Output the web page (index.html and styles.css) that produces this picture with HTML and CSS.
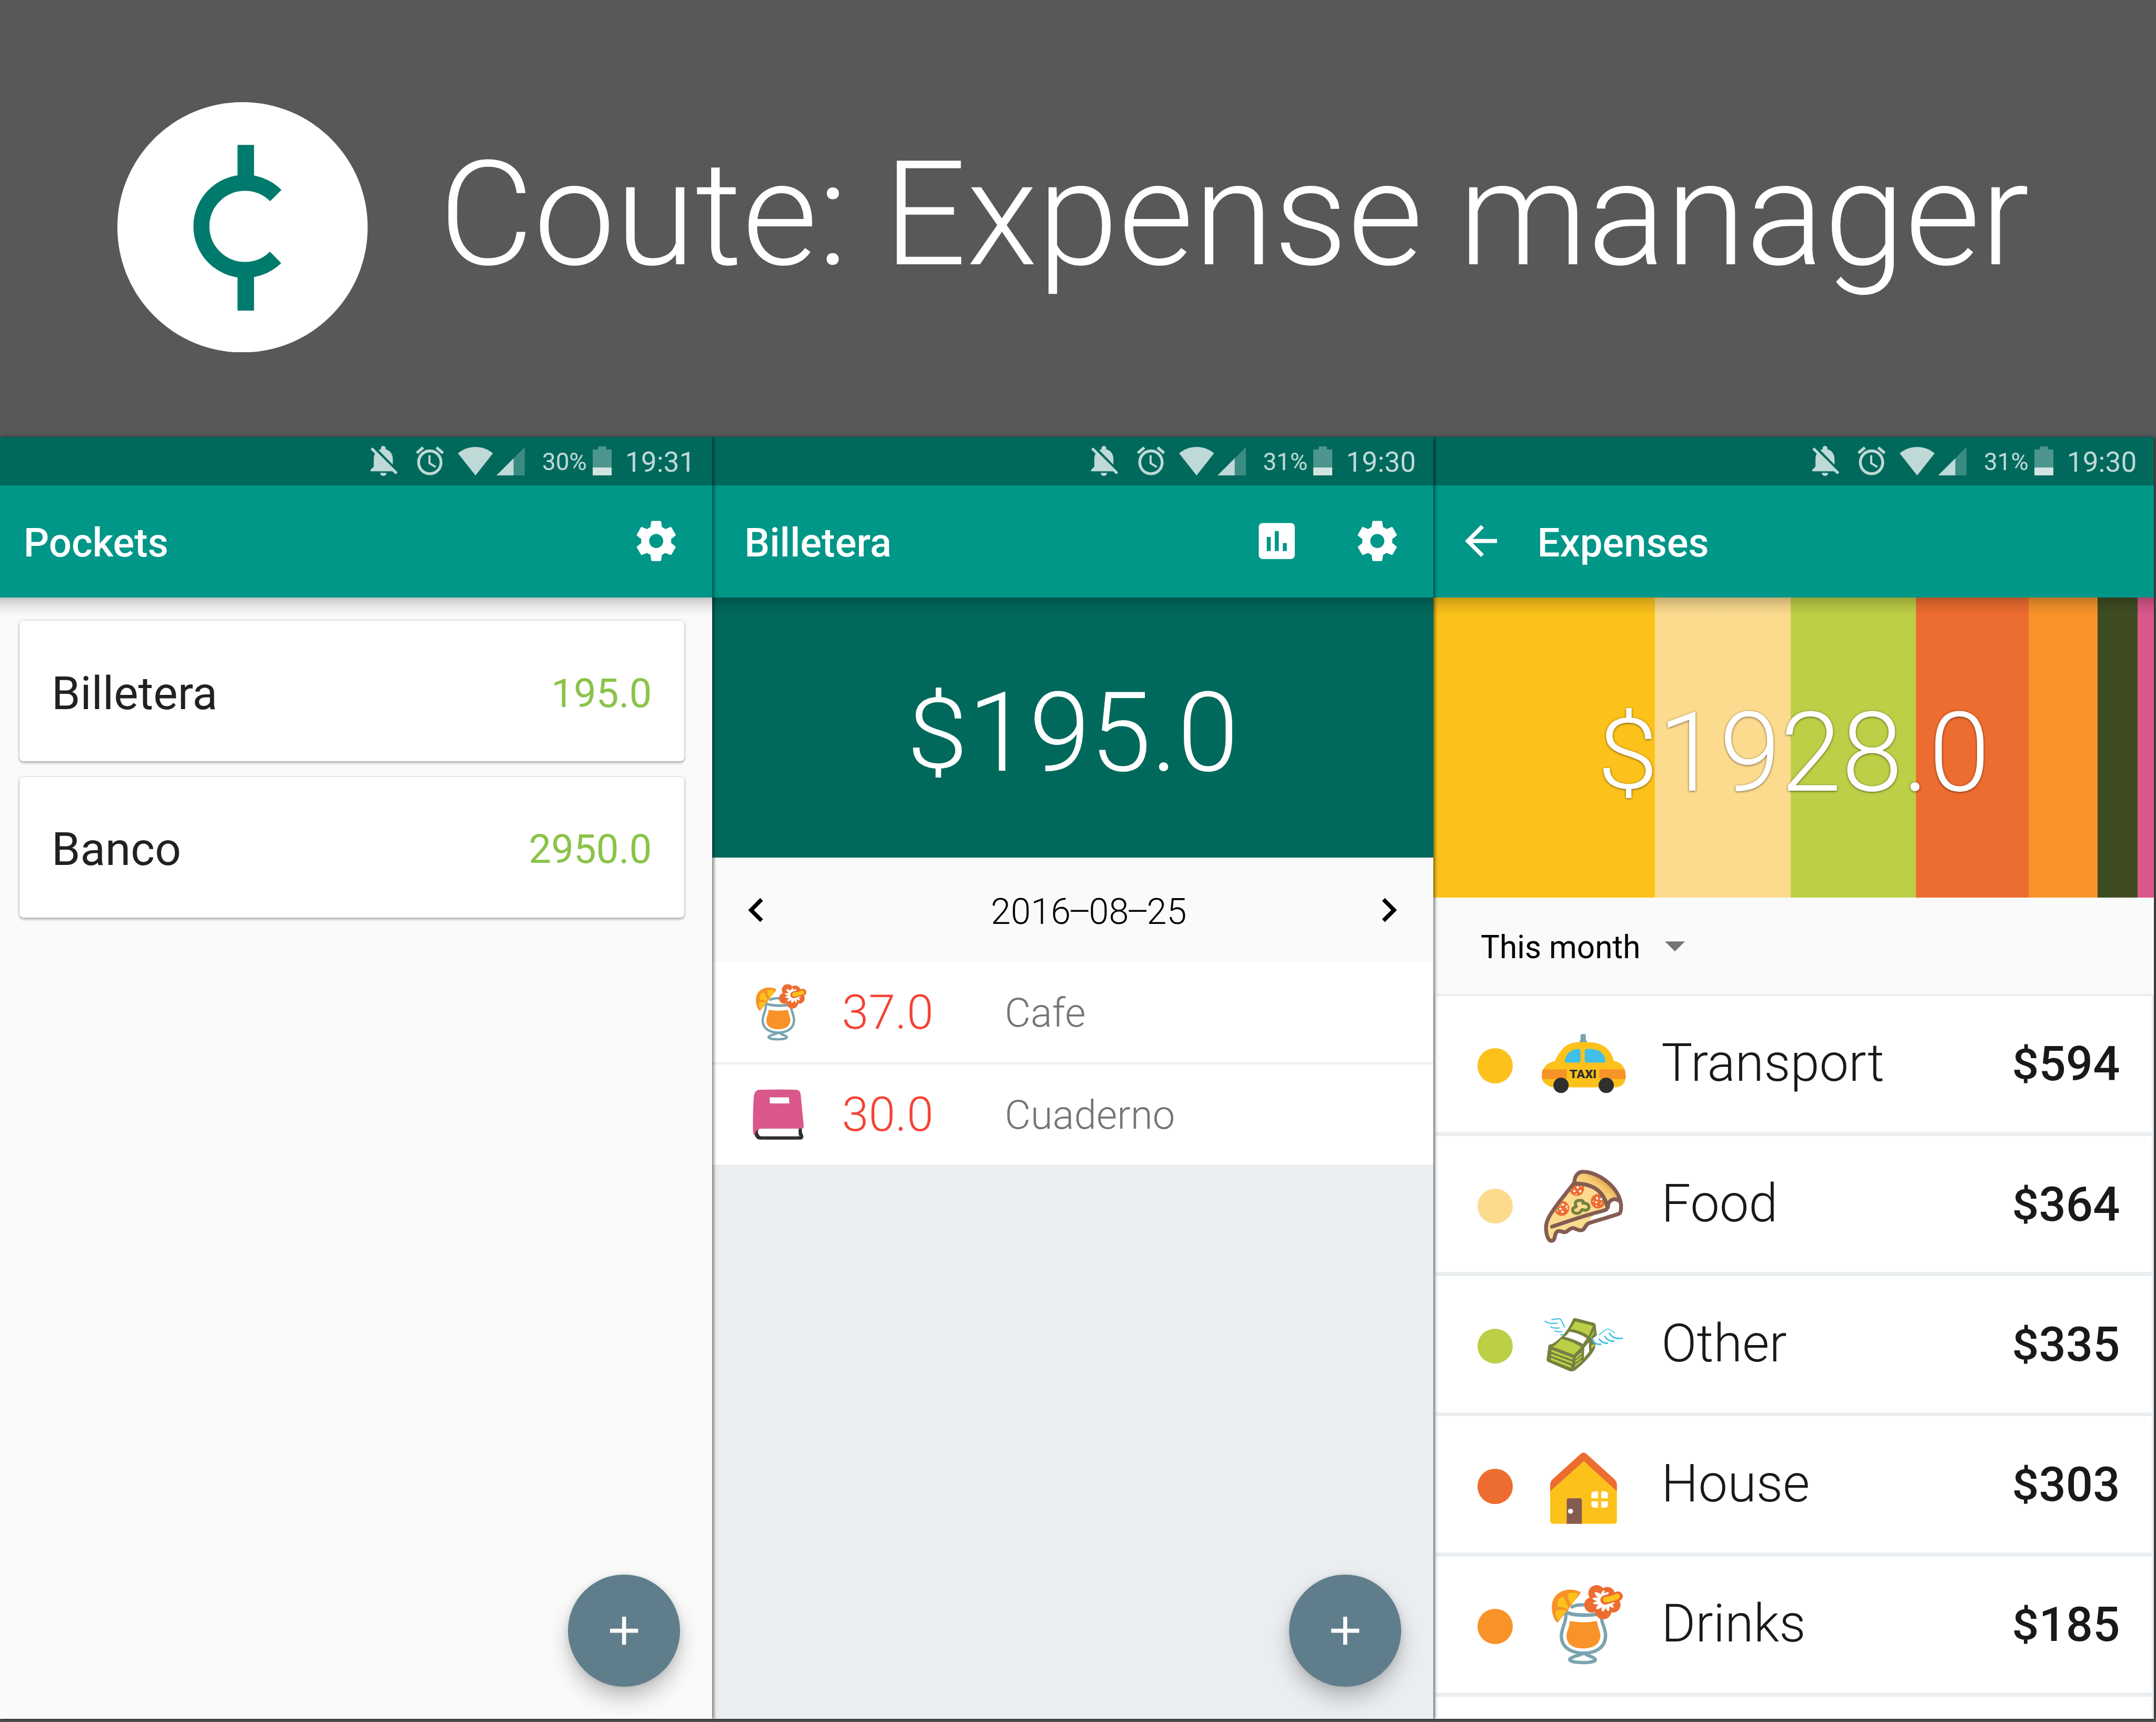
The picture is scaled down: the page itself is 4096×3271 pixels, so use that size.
FILE: index.html
```html
<!DOCTYPE html>
<html lang="en">
<head>
<meta charset="utf-8">
<title>Coute: Expense manager</title>
<link rel="stylesheet" href="styles.css">
</head>
<body>
<svg class="defs" aria-hidden="true">
  <defs>
    <linearGradient id="crust" gradientUnits="userSpaceOnUse" x1="400" y1="225" x2="470" y2="140">
      <stop offset="0" stop-color="#fbd583"/><stop offset="0.45" stop-color="#f6cb74"/><stop offset="1" stop-color="#e0a23f"/>
    </linearGradient>
    <clipPath id="slice"><path d="M315 190C430 185 490 240 508 335L180 450L150 430Z"/></clipPath>
    <symbol id="bell" viewBox="4 2.5 17 19.5" preserveAspectRatio="none"><path d="M20 18.69L7.84 6.14 5.27 3.49 4 4.76l2.8 2.8v.01c-.52.99-.8 2.16-.8 3.42v5l-2 2v1h13.73l2 2L21 19.72l-1-1.03zM12 22c1.11 0 2-.89 2-2h-4c0 1.11.89 2 2 2zm6-7.32V11c0-3.08-1.64-5.64-4.5-6.32V4c0-.83-.67-1.5-1.5-1.5s-1.5.67-1.5 1.5v.68c-.15.03-.29.08-.42.12-.1.03-.2.07-.3.11h-.01c-.01 0-.01 0-.02.01-.23.09-.46.2-.68.31 0 0-.01 0-.01.01L18 14.68z"/></symbol>
    <symbol id="alarm" viewBox="2 1.86 20 20.14" preserveAspectRatio="none"><path d="M22 5.72l-4.6-3.86-1.29 1.53 4.6 3.86L22 5.72zM7.88 3.39L6.6 1.86 2 5.71l1.29 1.53 4.59-3.85zM12.5 8H11v6l4.75 2.85.75-1.23-4-2.37V8zM12 4c-4.97 0-9 4.03-9 9s4.02 9 9 9c4.97 0 9-4.03 9-9s-4.03-9-9-9zm0 16c-3.87 0-7-3.13-7-7s3.13-7 7-7 7 3.13 7 7-3.13 7-7 7z"/></symbol>
    <symbol id="wifi" viewBox="0 0 70 57"><path d="M35 57L0 12.5C12 3.5 23 0 35 0S58 3.5 70 12.5Z"/></symbol>
    <symbol id="signal" viewBox="0 0 57 57"><path opacity=".3" d="M34.5 57V22.500L57 0V57Z"/><path d="M0 57L34.500 22.500V57Z"/></symbol>
    <symbol id="battery" viewBox="0 0 38 58"><path fill="#fff" fill-opacity=".3" d="M0 6H11V0H27V6H38V42H0Z"/><path fill="#fff" fill-opacity=".82" d="M0 42H38V58H0Z"/></symbol>
    <symbol id="gear" viewBox="0 0 24 24"><path d="M19.430 12.980c.04-.32.07-.64.07-.98s-.03-.66-.07-.98l2.110-1.650c.19-.15.24-.42.12-.64l-2-3.460c-.12-.22-.39-.3-.61-.22l-2.490 1c-.52-.4-1.080-.73-1.690-.98l-.38-2.650C14.460 2.180 14.250 2 14 2h-4c-.25 0-.46.18-.49.42l-.38 2.650c-.61.25-1.170.59-1.690.98l-2.490-1c-.23-.09-.49 0-.61.22l-2 3.460c-.13.22-.07.49.12.64l2.110 1.650c-.04.32-.07.65-.07.98s.03.66.07.98l-2.110 1.650c-.19.15-.24.42-.12.64l2 3.460c.12.22.39.3.61.22l2.490-1c.52.4 1.080.73 1.690.98l.38 2.650c.03.24.24.42.49.42h4c.25 0 .46-.18.49-.42l.38-2.650c.61-.25 1.170-.59 1.690-.98l2.490 1c.23.09.49 0 .61-.22l2-3.460c.12-.22.07-.49-.12-.64l-2.110-1.650zM12 15.500c-1.930 0-3.500-1.570-3.500-3.500s1.570-3.500 3.500-3.500 3.500 1.570 3.500 3.500-1.570 3.500-3.500 3.500z"/></symbol>
    <symbol id="stats" viewBox="0 0 24 24"><path d="M19 3H5c-1.100 0-2 .9-2 2v14c0 1.100.9 2 2 2h14c1.100 0 2-.9 2-2V5c0-1.100-.9-2-2-2zM9 17H7v-7h2v7zm4 0h-2V7h2v10zm4 0h-2v-4h2v4z"/></symbol>
    <symbol id="back" viewBox="0 0 24 24"><path d="M20 11H7.830l5.590-5.590L12 4l-8 8 8 8 1.410-1.410L7.830 13H20v-2z"/></symbol>
    <symbol id="prev" viewBox="0 0 24 24"><path d="M15.410 7.410L14 6l-6 6 6 6 1.410-1.410L10.830 12z"/></symbol>
    <symbol id="next" viewBox="0 0 24 24"><path d="M10 6L8.590 7.410 13.170 12l-4.580 4.590L10 18l6-6z"/></symbol>
    <symbol id="plus" viewBox="0 0 24 24"><path d="M19 13h-6v6h-2v-6H5v-2h6V5h2v6h6z"/></symbol>

    <symbol id="drink" viewBox="90 60 570 570">
      <g fill="none" stroke="#7aa4ae" stroke-width="20" stroke-linecap="round">
        <path d="M300 238C325 224 360 224 390 227"/>
        <path d="M263 280C266 340 236 355 236 418C240 488 305 515 368 515C432 515 500 488 501 410C501 362 478 345 475 295"/>
        <path stroke-width="22" d="M266 270C310 292 425 292 470 275"/>
        <path d="M350 524C310 535 285 545 286 553C288 577 438 577 440 555C440 545 415 536 386 524"/>
      </g>
      <path fill="#7aa4ae" d="M335 512H400L368 530Z"/>
      <path fill="#f79329" d="M291 323Q370 338 445 323Q450 322 451 330C454 362 470 380 470 412C466 468 420 487 368 487C310 487 268 465 267 415C267 380 285 362 286 330Q286 322 291 323Z"/>
      <path fill="#f79329" d="M208 329C180 300 174 240 182 210C200 145 275 115 348 147Q354 153 347 162L290 232L278 254L218 326Q213 334 208 329Z"/>
      <path fill="#fcc21b" d="M213 232C211 205 222 180 240 178Q250 178 254 187L278 245Q279 252 271 249Q240 238 216 237ZM274 168Q274 157 285 154Q315 150 338 159L298 229Q278 198 274 168ZM202 270Q202 260 214 258Q240 253 268 260L218 318Q201 300 202 270Z"/>
      <g fill="#ed6c30">
        <circle cx="447" cy="156" r="49"/><circle cx="512" cy="162" r="44"/><circle cx="419" cy="226" r="46"/>
        <circle cx="487" cy="262" r="50"/><circle cx="546" cy="226" r="45"/><circle cx="575" cy="174" r="29"/>
      </g>
      <path fill="#fff" d="M435 150Q448 146 473 162Q478 140 494 138Q497 152 490 160Q510 145 521 151Q518 165 495 175L480 195L495 215L520 218Q540 206 557 211Q555 222 540 222Q552 235 549 243Q535 244 524 233Q526 255 518 264Q504 258 504 238Q497 262 482 266Q472 255 480 235Q464 254 444 250Q443 235 461 224Q440 226 425 218Q428 207 452 204Q430 198 421 187Q430 178 456 184Q438 165 435 150Z"/>
      <path fill="none" stroke="#ed6c30" stroke-width="56" stroke-linecap="round" d="M498 196L574 174"/>
      <path fill="none" stroke="#fcc21b" stroke-width="34" stroke-linecap="round" d="M502 194Q536 192 570 175"/>
    </symbol>

    <symbol id="book" viewBox="0 0 135 135">
      <path fill="#2f2f2f" d="M20 92Q17 106 20 111Q23 117.500 29 117.500H110Q116 117.500 116 110Q112 104 113 95V92Z"/>
      <path fill="#fff" d="M27 95H107Q105 104 108 111H31Q22 107 27 95Z"/>
      <path fill="#d9578b" d="M29 18Q65 16.500 101 18Q109.500 18 110.500 27L116.700 91Q116.700 95.500 112 95.500H34Q20 96 19 109Q15 108 15.200 95Q15 55 17 32Q18 18.500 29 18Z"/>
      <path fill="#fff" d="M48.300 33H87L88 45.300H49Z"/>
    </symbol>

    <symbol id="taxi" viewBox="90 30 570 570">
      <path fill="#7aa4ae" d="M351 145Q351 135 361 135H373Q383 135 383 145V170Q389 172 390 188H343Q345 172 351 170Z"/>
      <path fill="#fcc21b" d="M197 297C228 240 252 184 345 183H395C475 186 528 212 551 296C592 302 622 332 622 388C620 430 598 454 560 454H190C155 452 119 420 119 398C119 340 142 307 197 297Z"/>
      <path fill="#f79329" d="M124 346H268V405H120Q117 372 124 346ZM463 346H616Q623 372 621 405H463Z"/>
      <path fill="#40c0e7" d="M332 224Q351 222 351 238V292Q351 306 337 306H268Q256 306 257 293Q270 232 332 224ZM392 224C466 222 492 250 501 290Q503 306 490 306H391Q376 306 376 292V238Q376 224 392 224Z"/>
      <circle fill="#2f2f2f" cx="234" cy="442" r="46"/><circle fill="#2f2f2f" cx="505" cy="442" r="46"/>
      <text class="taxi-sign" x="285" y="399" textLength="162" lengthAdjust="spacingAndGlyphs">TAXI</text>
    </symbol>

    <symbol id="pizza" viewBox="90 30 570 570">
      <path fill="#fcdb8e" d="M315 185C318 140 340 118 370 121C470 125 590 215 594 325L585 370L400 432C375 445 375 475 345 472C325 470 320 455 295 460C275 485 250 488 235 478C200 470 200 500 196 515C190 540 160 540 152 505C140 460 140 430 170 385C200 330 260 260 315 185Z"/>
      <path fill="url(#crust)" d="M315 185C318 140 340 118 370 121C470 125 575 205 594 300L516 315C490 235 420 180 315 190Z"/>
      <path fill="#fff" d="M432 377L387 434L585 370L594 300Q560 275 525 305L515 345Z"/>
      <g clip-path="url(#slice)">
        <g fill="#ed6c30"><circle cx="328" cy="222" r="44"/><circle cx="455" cy="298" r="43"/><circle cx="238" cy="340" r="45"/></g>
        <g fill="#fff"><path d="M326 213L333 205L343 212L338 222L328 220ZM305 235L317 228L323 240L310 244ZM340 235L352 229L357 241L347 247ZM443 275L450 268L458 282L449 291ZM466 283L478 276L485 288L472 292ZM438 300L450 297L453 308L442 310ZM472 305L480 312L470 317ZM235 317L248 310L256 319L243 326ZM260 328L272 322L273 335L264 338ZM222 340L234 335L240 346L226 350ZM233 358L246 353L252 362L240 369Z"/>
        <circle cx="355" cy="206" r="4"/><circle cx="297" cy="226" r="4"/><circle cx="325" cy="256" r="4"/><circle cx="428" cy="298" r="4"/><circle cx="446" cy="324" r="4"/><circle cx="490" cy="300" r="4"/><circle cx="213" cy="355" r="4"/><circle cx="272" cy="343" r="4"/><circle cx="230" cy="326" r="3"/></g>
      </g>
      <path fill="none" stroke="#748140" stroke-width="18" stroke-linejoin="round" d="M324 325C312 298 330 292 348 292C366 292 370 298 365 309C385 308 402 315 402 333C400 352 378 354 360 348C352 360 345 371 325 370C305 368 300 350 306 340C312 330 330 336 324 325Z"/>
      <g fill="none" stroke="#855c52" stroke-width="23" stroke-linecap="round" stroke-linejoin="round">
        <path d="M313 188C315 142 340 118 370 121C470 125 590 225 594 325Q594 365 586 370C560 384 450 410 400 429C372 443 380 474 350 472C325 470 318 455 300 459C280 462 272 485 252 483C230 478 215 468 204 488C194 500 202 533 176 535C156 533 144 495 144 455C144 400 190 350 220 305Z"/>
        <path d="M320 191C430 190 490 245 508 320C522 352 500 350 440 367C370 385 240 430 180 450"/>
        <path d="M516 330C515 290 555 273 584 296"/>
      </g>
    </symbol>

    <symbol id="money" viewBox="90 0 570 570">
      <path fill="#748140" d="M318 128L430 157Q441 160 442 172L449 235L440 290L437 310C420 350 370 400 320 440Q305 452 285 446L155 390Q146 385 148 375L158 295C159 288 165 287 180 284C230 255 275 205 303 140Q308 128 318 128Z"/>
      <path fill="#bdcf46" d="M320 148L425 175L399 236C370 215 330 198 290 195ZM236 254C280 262 320 280 355 302L311 348L183 300C205 290 220 272 236 254ZM177 318L303 366V378L177 331ZM175 343L302 390V402L175 355ZM173 366L296 414L293 427L173 379ZM322 362L358 332V343L322 374ZM320 385L358 355V365L320 396ZM318 408L358 378L356 388L318 420ZM413 236L434 204V216L412 250ZM415 292L437 282L435 293L416 312Z"/>
      <path fill="#fff" d="M284 210C320 215 360 230 388 250L365 284C330 262 290 250 254 240C268 232 276 222 284 210ZM373 306L401 273L403 330L371 368ZM425 250L450 232L470 280L440 280Z"/>
      <g fill="none" stroke="#40c0e7" stroke-width="7" stroke-linecap="round" stroke-linejoin="round">
        <path d="M138 147Q165 168 211 158M179 138Q215 130 230 134Q240 148 255 183M171 181Q190 192 223 187M198 205Q212 213 240 209M232 228H243"/>
        <path stroke-width="5" d="M462 230Q500 195 515 193Q530 198 555 216"/>
        <path stroke-width="9" d="M524 219Q545 258 600 249M497 238Q512 268 551 268M463 254Q480 280 513 279M422 254Q427 286 472 286"/>
      </g>
    </symbol>

    <symbol id="house" viewBox="90 30 570 570">
      <path fill="#ed6c30" d="M354 131Q369 120 384 131L554 285Q569 300 569 320V360L371 190L169 360V320Q169 300 184 285Z"/>
      <path fill="#fcc21b" d="M371 177L569 357V532Q569 552 549 552H189Q169 552 169 532V357Z"/>
      <path fill="#855c52" d="M268 552V413Q268 399 282 399H345Q359 399 359 413V552Z"/>
      <circle fill="#fff" cx="291" cy="477" r="15"/>
      <path fill="#fff" d="M456 357V399H416V377Q416 357 436 357ZM475 357H495Q515 357 515 377V399H475ZM416 417H456V455H436Q416 455 416 435ZM475 417H515V435Q515 455 495 455H475Z"/>
    </symbol>
  </defs>
</svg>

<header class="banner">
  <svg class="logo" viewBox="0 0 500 500">
    <circle cx="250" cy="250" r="250" fill="#fff"/>
    <g fill="none" stroke="#007a6c"><path stroke-width="32" d="M316.500 186.700A87 87 0 1 0 316 310"/><path stroke-width="33" d="M256.500 85.500V155M256.500 340V416.500"/></g>
  </svg>
  <h1 class="banner-title">Coute: Expense manager</h1>
</header>

<main class="screens">
  <section class="screen screen-pockets">
    <div class="status">
      <svg class="s-bell"><use href="#bell"/></svg><svg class="s-alarm"><use href="#alarm"/></svg><svg class="s-wifi"><use href="#wifi"/></svg><svg class="s-signal"><use href="#signal"/></svg>
      <span class="s-percent">30%</span><svg class="s-battery"><use href="#battery"/></svg><span class="s-clock">19:31</span>
    </div>
    <div class="appbar"><h2>Pockets</h2><svg class="icon"><use href="#gear"/></svg></div>
    <div class="content">
      <article class="card"><span class="card-name">Billetera</span><span class="card-sum">195.0</span></article>
      <article class="card"><span class="card-name">Banco</span><span class="card-sum">2950.0</span></article>
    </div>
    <button class="fab"><svg class="icon"><use href="#plus"/></svg></button>
  </section>

  <section class="screen screen-pocket">
    <div class="status">
      <svg class="s-bell"><use href="#bell"/></svg><svg class="s-alarm"><use href="#alarm"/></svg><svg class="s-wifi"><use href="#wifi"/></svg><svg class="s-signal"><use href="#signal"/></svg>
      <span class="s-percent">31%</span><svg class="s-battery"><use href="#battery"/></svg><span class="s-clock">19:30</span>
    </div>
    <div class="appbar"><h2>Billetera</h2><svg class="icon"><use href="#stats"/></svg><svg class="icon"><use href="#gear"/></svg></div>
    <div class="content">
      <div class="balance"><span class="cur">$</span>195.0</div>
      <div class="datebar"><svg class="icon"><use href="#prev"/></svg><span class="date">2016<span class="dash">–</span>08<span class="dash">–</span>25</span><svg class="icon"><use href="#next"/></svg></div>
      <div class="entries">
        <div class="entry"><svg class="entry-icon"><use href="#drink"/></svg><span class="entry-sum">37.0</span><span class="entry-name">Cafe</span></div>
        <div class="entry"><svg class="entry-icon"><use href="#book"/></svg><span class="entry-sum">30.0</span><span class="entry-name">Cuaderno</span></div>
      </div>
    </div>
    <button class="fab"><svg class="icon"><use href="#plus"/></svg></button>
  </section>

  <section class="screen screen-expenses">
    <div class="status">
      <svg class="s-bell"><use href="#bell"/></svg><svg class="s-alarm"><use href="#alarm"/></svg><svg class="s-wifi"><use href="#wifi"/></svg><svg class="s-signal"><use href="#signal"/></svg>
      <span class="s-percent">31%</span><svg class="s-battery"><use href="#battery"/></svg><span class="s-clock">19:30</span>
    </div>
    <div class="appbar"><svg class="icon"><use href="#back"/></svg><h2>Expenses</h2></div>
    <div class="content">
      <div class="chart">
        <i class="bar c-transport" style="width:4.43rem"></i><i class="bar c-food" style="width:2.71rem"></i><i class="bar c-other" style="width:2.5rem"></i><i class="bar c-house" style="width:2.26rem"></i><i class="bar c-drinks" style="width:1.37rem"></i><i class="bar c-olive" style="width:.8rem"></i><i class="bar c-pink" style="width:.33rem"></i>
        <div class="total"><span class="cur">$</span>1928.0</div>
      </div>
      <div class="period"><span>This month</span><i class="caret"></i></div>
      <div class="categories">
        <div class="category"><i class="dot c-transport"></i><svg class="cat-icon"><use href="#taxi"/></svg><span class="cat-name">Transport</span><span class="cat-sum"><span class="cur">$</span>594</span></div>
        <div class="category"><i class="dot c-food"></i><svg class="cat-icon"><use href="#pizza"/></svg><span class="cat-name">Food</span><span class="cat-sum"><span class="cur">$</span>364</span></div>
        <div class="category"><i class="dot c-other"></i><svg class="cat-icon"><use href="#money"/></svg><span class="cat-name">Other</span><span class="cat-sum"><span class="cur">$</span>335</span></div>
        <div class="category"><i class="dot c-house"></i><svg class="cat-icon"><use href="#house"/></svg><span class="cat-name">House</span><span class="cat-sum"><span class="cur">$</span>303</span></div>
        <div class="category"><i class="dot c-drinks"></i><svg class="cat-icon"><use href="#drink"/></svg><span class="cat-name">Drinks</span><span class="cat-sum"><span class="cur">$</span>185</span></div>
        <div class="category"></div>
      </div>
    </div>
  </section>
</main>
</body>
</html>
```
FILE: styles.css
```css
/* 1rem is 100 device pixels of the phone screens, scaled to the sheet */
html { font-size: 95.101px; }
* { box-sizing: border-box; }
body {
  margin: 0;
  width: 43.07rem;
  height: 34.4rem;
  overflow: hidden;
  background: #57585a;
  font-family: Roboto, "Open Sans", sans-serif;
  display: flex;
  flex-direction: column;
}
.defs { position: absolute; width: 0; height: 0; }
svg { display: block; flex: none; }
h1, h2 { margin: 0; }

.banner {
  flex: none;
  height: 8.73rem;
  display: flex;
  align-items: flex-start;
  padding: 2.036rem 0 0 2.35rem;
}
.logo { width: 5rem; height: 5rem; }
.banner-title {
  margin: .75rem 0 0 1.42rem;
  font-size: 2.911rem;
  line-height: 3rem;
  font-weight: 300;
  color: #fff;
  white-space: nowrap;
}

.screens { display: flex; height: 25.6rem; flex: none; }
.screen {
  position: relative;
  flex: none;
  width: 14.4rem;
  height: 25.6rem;
  display: flex;
  flex-direction: column;
  box-shadow: .02rem .01rem .07rem rgba(0, 0, 0, .65);
}
.screen-pockets { width: 14.23rem; z-index: 3; background: #fafafa; }
.screen-pocket { z-index: 2; background: #eaeef1; }
.screen-expenses { z-index: 1; background: #fff; }

.status {
  flex: none;
  height: .96rem;
  background: #00695c;
  color: #bfd9d6;
  fill: #bfd9d6;
  display: flex;
  justify-content: flex-end;
  padding: .18rem .38rem 0 0;
}
.s-bell { width: .54rem; height: .6rem; margin-right: .37rem; }
.s-alarm { width: .56rem; height: .575rem; margin: .01rem .28rem 0 0; }
.s-wifi { width: .7rem; height: .57rem; margin: .015rem .07rem 0 0; }
.s-signal { width: .57rem; height: .57rem; margin: .015rem .34rem 0 0; }
.s-percent { width: .89rem; font-size: .48rem; line-height: .6rem; margin: .02rem .12rem 0 0; }
.s-battery { width: .38rem; height: .58rem; margin: .01rem .27rem 0 0; }
.s-clock { width: 1.36rem; font-size: .56rem; line-height: .6rem; margin-top: .03rem; }

.appbar {
  flex: none;
  height: 2.24rem;
  background: #009688;
  color: #fff;
  fill: #fff;
  display: flex;
  align-items: center;
  gap: 1.04rem;
  padding: 0 .64rem;
}
.appbar h2 { flex: 1; font-size: .8rem; line-height: 1rem; font-weight: 500; padding-top: .08rem; }
.screen-pockets .appbar { padding-left: .47rem; }
.screen-expenses .appbar { padding-left: .48rem; gap: .64rem; }
.icon { width: .96rem; height: .96rem; }

/* shadow cast by the app bar */
.content { position: relative; flex: 1; min-height: 0; overflow: hidden; }
.content::before {
  content: "";
  position: absolute;
  z-index: 2;
  left: 0;
  right: 0;
  top: 0;
  height: .36rem;
  background: linear-gradient(rgba(0, 0, 0, .21), rgba(0, 0, 0, .08) 50%, transparent);
}

.screen-pockets .content { padding: .47rem .56rem 0 .39rem; display: flex; flex-direction: column; gap: .31rem; }
.card {
  height: 2.81rem;
  border-radius: .08rem;
  background: #fff;
  box-shadow: 0 .03rem .06rem rgba(0, 0, 0, .3), 0 0 .04rem rgba(0, 0, 0, .15);
  display: flex;
  align-items: center;
  justify-content: space-between;
  padding: .08rem .65rem 0 .64rem;
}
.card-name { font-size: .92rem; color: #212121; }
.card-sum { font-size: .8rem; color: #8bc34a; }

.fab {
  position: absolute;
  z-index: 3;
  right: .64rem;
  bottom: .64rem;
  width: 2.24rem;
  height: 2.24rem;
  border: 0;
  padding: 0;
  border-radius: 50%;
  background: #607d8b;
  fill: #fff;
  display: flex;
  align-items: center;
  justify-content: center;
  box-shadow: 0 .24rem .4rem rgba(0, 0, 0, .22), 0 .02rem .14rem rgba(0, 0, 0, .1);
}

/* the currency sign is set lower than the digits around it */
.cur { display: inline-block; transform: scaleY(.89); transform-origin: 50% 54%; }

.balance {
  height: 5.2rem;
  background: #00695c;
  color: #fff;
  font-size: 2.2rem;
  font-weight: 300;
  line-height: 5.2rem;
  text-align: center;
  padding-top: .12rem;
}
.datebar {
  height: 2.09rem;
  background: #fafafa;
  display: flex;
  align-items: center;
  justify-content: space-between;
  padding: 0 .4rem;
  font-size: .72rem;
  font-weight: 300;
  color: #000;
}
.date { padding: .06rem 0 0 .64rem; }
.dash { margin: 0 -.055rem; }
.entries { display: flex; flex-direction: column; gap: .04rem; }
.entry {
  height: 2rem;
  background: #fff;
  display: grid;
  grid-template-columns: 1.35rem 3.24rem 1fr;
  align-items: center;
  padding-left: .66rem;
  font-weight: 300;
}
.entry-icon { width: 1.35rem; height: 1.35rem; }
.entry-sum { padding-left: .58rem; font-size: .96rem; color: #f44336; }
.entry-name { padding: .02rem 0 0 .59rem; font-size: .8rem; color: #757575; }

.chart { position: relative; height: 6rem; display: flex; }
.bar { flex: none; height: 6rem; }
.c-transport { background: #fcc21b; }
.c-food { background: #fcdb8e; }
.c-other { background: #bdcf46; }
.c-house { background: #ed6c30; }
.c-drinks { background: #f79329; }
.c-olive { background: #3f4c21; }
.c-pink { background: #d9578b; }
.total {
  position: absolute;
  inset: 0;
  color: #fff;
  font-size: 2.2rem;
  font-weight: 300;
  line-height: 6.22rem;
  text-align: center;
  text-shadow: 0 .01rem .05rem rgba(0, 0, 0, .6);
}
.period {
  height: 1.92rem;
  background: #fafafa;
  display: flex;
  align-items: center;
  padding-left: .95rem;
  font-size: .634rem;
  color: #000;
}
.period span { width: 3.68rem; padding-top: .06rem; }
.caret { width: .4rem; height: .2rem; margin-top: .03rem; background: #757575; clip-path: polygon(0 0, 100% 0, 50% 100%); }
.categories {
  background: #eaeef1;
  padding: .04rem;
  display: flex;
  flex-direction: column;
  gap: .08rem;
}
.category {
  flex: none;
  height: 2.72rem;
  background: #fff;
  display: flex;
  align-items: center;
  padding: 0 .64rem 0 .85rem;
}
.dot { width: .7rem; height: .7rem; border-radius: 50%; margin: .08rem .48rem 0 0; }
.cat-icon { width: 1.9rem; height: 1.9rem; margin-right: .59rem; }
.cat-name { flex: 1; font-size: 1.043rem; font-weight: 300; color: #191919; padding-bottom: .03rem; }
.cat-sum { font-size: .95rem; font-weight: 500; color: #191919; padding-top: .01rem; }

.taxi-sign { font: 900 67px Roboto, sans-serif; fill: #2f2f2f; }
```
